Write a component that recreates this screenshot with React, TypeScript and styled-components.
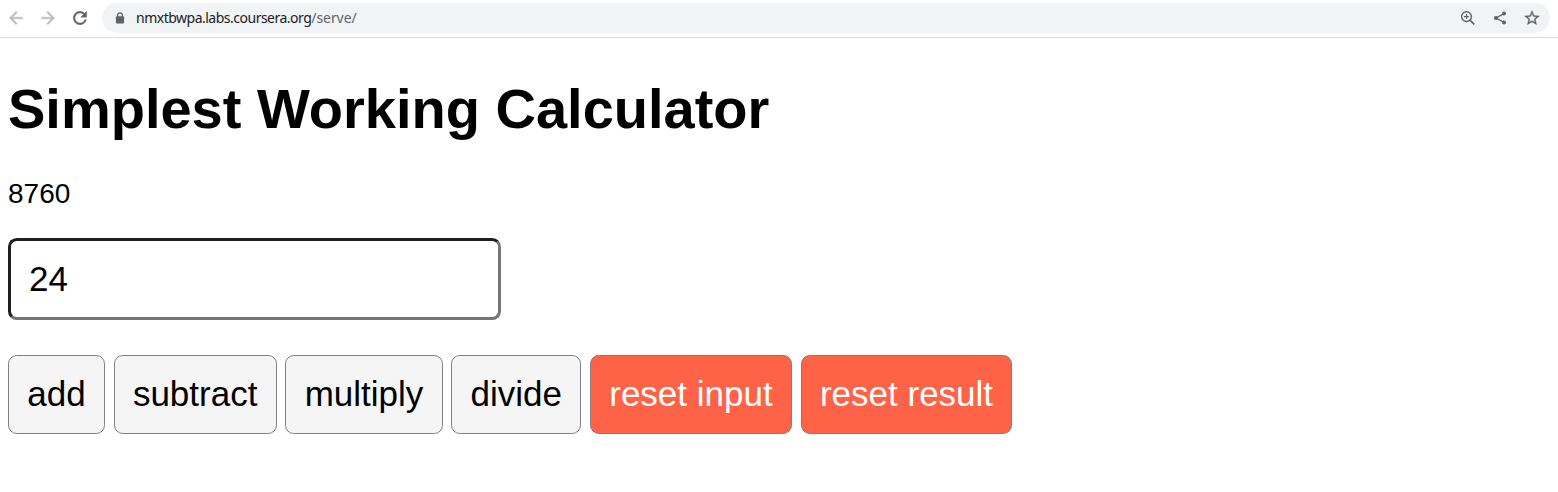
import React from "react";
import styled, { createGlobalStyle } from "styled-components";
import { MdArrowBack, MdArrowForward, MdRefresh, MdStarBorder } from "react-icons/md";

const GlobalStyle = createGlobalStyle`
  * { box-sizing: border-box; }
  body {
    margin: 0;
    background: #fff;
    color: #000;
    font-family: "Liberation Sans", Arial, sans-serif;
  }
`;

const Toolbar = styled.header`
  display: flex;
  align-items: flex-start;
  height: 38px;
  padding: 3px 8px 0 6px;
  border-bottom: 1px solid #d9dbde;
`;

const NavButtons = styled.nav`
  display: flex;
  align-items: center;
  gap: 12px;
  height: 30px;
  width: 96px;
  flex: none;
`;

const NavIcon = styled.span<{ $muted?: boolean }>`
  display: flex;
  color: ${({ $muted }) => ($muted ? "#babcbe" : "#5f6368")};

  path:not([fill="none"]) {
    stroke: currentColor;
    stroke-width: 0.5px;
  }
  path[fill="none"] {
    stroke: none;
  }
`;

const AddressBar = styled.div`
  display: flex;
  flex: 1;
  align-items: center;
  height: 30px;
  padding: 0 9px 0 12px;
  border-radius: 15px;
  background: #f1f3f4;
  color: #5f6368;
`;

const Address = styled.span`
  flex: 1;
  margin-left: 10px;
  font: 14px/20px "Noto Sans", "Open Sans", sans-serif;
  letter-spacing: -0.08px;
  white-space: nowrap;
`;

const Host = styled.span`
  color: #202124;
  letter-spacing: -0.5px;
`;

const Actions = styled.div`
  display: flex;
  align-items: center;
  gap: 14px;

  svg {
    display: block;
  }
`;

const StarIcon = styled(MdStarBorder)`
  path[fill="none"] {
    stroke: none;
  }
  path:not([fill="none"]) {
    stroke: currentColor;
    stroke-width: 0.4px;
  }
`;

const Page = styled.main`
  padding: 0 8px;
`;

const Title = styled.h1`
  margin: 0;
  padding-top: 39px;
  font-size: 56px;
  line-height: 64px;
`;

const Result = styled.p`
  margin: 36px 0 28px;
  font-size: 28px;
  line-height: 33px;
`;

const NumberInput = styled.input`
  display: block;
  width: 493px;
  height: 82px;
  padding: 18px;
  border: 3px solid;
  border-color: #1f1f21 #767676 #767676 #1f1f21;
  border-radius: 8.75px;
  outline: none;
  background: #fff;
  color: #000;
  font: 35px "Liberation Sans", Arial, sans-serif;
`;

const ButtonRow = styled.div`
  display: flex;
  gap: 8.75px;
  margin-top: 35px;
`;

const Button = styled.button<{ $reset?: boolean }>`
  height: 79px;
  padding: 0 18.25px 2px;
  border: 1px solid #808080;
  border-radius: 8.75px;
  background: ${({ $reset }) => ($reset ? "#ff6347" : "#f5f5f5")};
  color: ${({ $reset }) => ($reset ? "#fff" : "#000")};
  font: 35px "Liberation Sans", Arial, sans-serif;
  white-space: nowrap;
`;

function LockIcon() {
  return (
    <svg width="12" height="12" viewBox="0 0 12 12" fill="none">
      <path d="M3.7 5V3.1a2.3 2.3 0 0 1 4.6 0V5" stroke="currentColor" strokeWidth="1.2" />
      <rect x="1.9" y="4.2" width="8.2" height="7.2" rx="1" fill="currentColor" />
    </svg>
  );
}

function MagnifierIcon() {
  return (
    <svg width="18" height="18" viewBox="0 0 18 18" fill="none" stroke="currentColor">
      <circle cx="7.5" cy="7.6" r="4.9" strokeWidth="1.4" />
      <path d="M11 11.1l4.2 4.2" strokeWidth="1.7" />
      <path d="M5 7.6h5M7.5 5.1v5" strokeWidth="1.2" />
    </svg>
  );
}

function ShareIcon() {
  return (
    <svg width="18" height="18" viewBox="0 0 18 18" fill="currentColor">
      <path d="M13 4.6L5 9l8 4.5" fill="none" stroke="currentColor" strokeWidth="1.3" />
      <circle cx="13" cy="4.6" r="2" />
      <circle cx="5" cy="9" r="2.1" />
      <circle cx="13" cy="13.5" r="2" />
    </svg>
  );
}

export default function App() {
  return (
    <>
      <GlobalStyle />
      <Toolbar>
        <NavButtons>
          <NavIcon $muted><MdArrowBack size={20} /></NavIcon>
          <NavIcon $muted><MdArrowForward size={20} /></NavIcon>
          <NavIcon><MdRefresh size={20} /></NavIcon>
        </NavButtons>
        <AddressBar>
          <LockIcon />
          <Address>
            <Host>nmxtbwpa.labs.coursera.org</Host>/serve/
          </Address>
          <Actions>
            <MagnifierIcon />
            <ShareIcon />
            <StarIcon size={18} />
          </Actions>
        </AddressBar>
      </Toolbar>
      <Page>
        <Title>Simplest Working Calculator</Title>
        <Result>8760</Result>
        <NumberInput type="text" defaultValue="24" />
        <ButtonRow>
          <Button>add</Button>
          <Button>subtract</Button>
          <Button>multiply</Button>
          <Button>divide</Button>
          <Button $reset>reset input</Button>
          <Button $reset>reset result</Button>
        </ButtonRow>
      </Page>
    </>
  );
}
